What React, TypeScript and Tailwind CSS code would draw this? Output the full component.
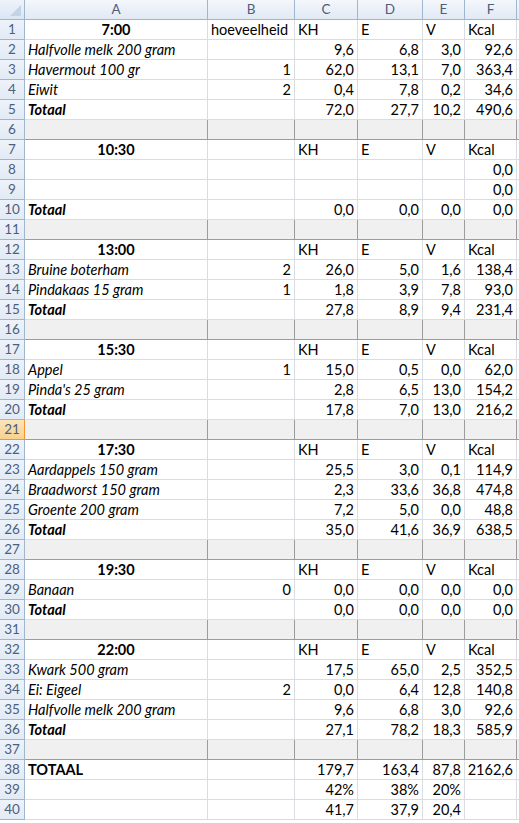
import React from "react";

type Row = {
  n: number;
  a?: string;
  aKind?: "time" | "item" | "total" | "grand";
  b?: string;
  c?: string;
  d?: string;
  e?: string;
  f?: string;
  head?: boolean;
  sep?: boolean;
};

const rows: Row[] = [
  { n: 1, a: "7:00", aKind: "time", b: "hoeveelheid", head: true },
  { n: 2, a: "Halfvolle melk 200 gram", c: "9,6", d: "6,8", e: "3,0", f: "92,6" },
  { n: 3, a: "Havermout 100 gr", b: "1", c: "62,0", d: "13,1", e: "7,0", f: "363,4" },
  { n: 4, a: "Eiwit", b: "2", c: "0,4", d: "7,8", e: "0,2", f: "34,6" },
  { n: 5, a: "Totaal", aKind: "total", c: "72,0", d: "27,7", e: "10,2", f: "490,6" },
  { n: 6, sep: true },
  { n: 7, a: "10:30", aKind: "time", head: true },
  { n: 8, f: "0,0" },
  { n: 9, f: "0,0" },
  { n: 10, a: "Totaal", aKind: "total", c: "0,0", d: "0,0", e: "0,0", f: "0,0" },
  { n: 11, sep: true },
  { n: 12, a: "13:00", aKind: "time", head: true },
  { n: 13, a: "Bruine boterham", b: "2", c: "26,0", d: "5,0", e: "1,6", f: "138,4" },
  { n: 14, a: "Pindakaas 15 gram", b: "1", c: "1,8", d: "3,9", e: "7,8", f: "93,0" },
  { n: 15, a: "Totaal", aKind: "total", c: "27,8", d: "8,9", e: "9,4", f: "231,4" },
  { n: 16, sep: true },
  { n: 17, a: "15:30", aKind: "time", head: true },
  { n: 18, a: "Appel", b: "1", c: "15,0", d: "0,5", e: "0,0", f: "62,0" },
  { n: 19, a: "Pinda's 25 gram", c: "2,8", d: "6,5", e: "13,0", f: "154,2" },
  { n: 20, a: "Totaal", aKind: "total", c: "17,8", d: "7,0", e: "13,0", f: "216,2" },
  { n: 21, sep: true },
  { n: 22, a: "17:30", aKind: "time", head: true },
  { n: 23, a: "Aardappels 150 gram", c: "25,5", d: "3,0", e: "0,1", f: "114,9" },
  { n: 24, a: "Braadworst 150 gram", c: "2,3", d: "33,6", e: "36,8", f: "474,8" },
  { n: 25, a: "Groente 200 gram", c: "7,2", d: "5,0", e: "0,0", f: "48,8" },
  { n: 26, a: "Totaal", aKind: "total", c: "35,0", d: "41,6", e: "36,9", f: "638,5" },
  { n: 27, sep: true },
  { n: 28, a: "19:30", aKind: "time", head: true },
  { n: 29, a: "Banaan", b: "0", c: "0,0", d: "0,0", e: "0,0", f: "0,0" },
  { n: 30, a: "Totaal", aKind: "total", c: "0,0", d: "0,0", e: "0,0", f: "0,0" },
  { n: 31, sep: true },
  { n: 32, a: "22:00", aKind: "time", head: true },
  { n: 33, a: "Kwark 500 gram", c: "17,5", d: "65,0", e: "2,5", f: "352,5" },
  { n: 34, a: "Ei: Eigeel", b: "2", c: "0,0", d: "6,4", e: "12,8", f: "140,8" },
  { n: 35, a: "Halfvolle melk 200 gram", c: "9,6", d: "6,8", e: "3,0", f: "92,6" },
  { n: 36, a: "Totaal", aKind: "total", c: "27,1", d: "78,2", e: "18,3", f: "585,9" },
  { n: 37, sep: true },
  { n: 38, a: "TOTAAL", aKind: "grand", c: "179,7", d: "163,4", e: "87,8", f: "2162,6" },
  { n: 39, c: "42%", d: "38%", e: "20%" },
  { n: 40, c: "41,7", d: "37,9", e: "20,4" },
];

const cols = "grid-cols-[25px_183px_87px_63px_65px_42px_52px_1fr]";

function aClass(kind?: Row["aKind"]) {
  if (kind === "time") return "justify-center font-bold";
  if (kind === "total") return "font-bold italic";
  if (kind === "grand") return "font-bold";
  return "italic";
}

function SheetRow({ row }: { row: Row }) {
  const selected = row.n === 21;
  const cell = row.sep
    ? "h-[20px] border-r border-b border-[#9c9c9c] bg-[#f0f0f0]"
    : "h-[20px] border-r border-b border-[#d9dce1] flex items-center px-[3px] whitespace-nowrap overflow-hidden";
  const num = cell + " justify-end";
  return (
    <div className={`grid ${cols}`}>
      <div
        className={
          selected
            ? "flex h-[20px] items-center justify-center border-r border-b border-[#f29436] bg-gradient-to-b from-[#fbe4bb] to-[#f8d18e] text-[13.5px] text-[#4d5f7c]"
            : "flex h-[20px] items-center justify-center border-r border-b border-[#9eb6ce] bg-gradient-to-b from-[#eef3fa] to-[#e2eaf5] text-[13.5px] text-[#4d5f7c]"
        }
      >
        {row.n}
      </div>
      {row.sep ? (
        <>
          <div className={cell} />
          <div className={cell} />
          <div className={cell} />
          <div className={cell} />
          <div className={cell} />
          <div className={cell} />
          <div className="h-[20px] border-b border-[#9c9c9c] bg-[#f0f0f0]" />
        </>
      ) : (
        <>
          <div className={`${cell} ${aClass(row.aKind)}`}>{row.a}</div>
          <div className={row.head ? cell : num}>{row.b}</div>
          <div className={row.head ? cell : num}>{row.head ? "KH" : row.c}</div>
          <div className={row.head ? cell : num}>{row.head ? "E" : row.d}</div>
          <div className={row.head ? cell : num}>{row.head ? "V" : row.e}</div>
          <div className={row.head ? cell : num}>{row.head ? "Kcal" : row.f}</div>
          <div className="h-[20px] border-b border-[#d9dce1]" />
        </>
      )}
    </div>
  );
}

export default function App() {
  const letters = ["A", "B", "C", "D", "E", "F"];
  return (
    <div className="h-[823px] w-[519px] overflow-hidden bg-white font-['Lato','Open_Sans',sans-serif] text-[14.5px] text-black">
      <div className={`grid ${cols}`}>
        <div className="relative h-[20px] border-r border-b border-[#9eb6ce] bg-gradient-to-b from-[#eef3fa] to-[#dbe6f4]">
          <svg className="absolute right-[3px] bottom-[3px]" width="11" height="11" viewBox="0 0 11 11">
            <polygon points="11,0 11,11 0,11" fill="#c3d3e6" />
          </svg>
        </div>
        {letters.map((l) => (
          <div
            key={l}
            className="flex h-[20px] items-center justify-center border-r border-b border-[#9eb6ce] bg-gradient-to-b from-[#f4f7fb] to-[#e1e9f4] text-[13.5px] text-[#4d5f7c]"
          >
            {l}
          </div>
        ))}
        <div className="h-[20px] border-b border-[#9eb6ce] bg-gradient-to-b from-[#f4f7fb] to-[#e1e9f4]" />
      </div>
      {rows.map((r) => (
        <SheetRow key={r.n} row={r} />
      ))}
    </div>
  );
}
